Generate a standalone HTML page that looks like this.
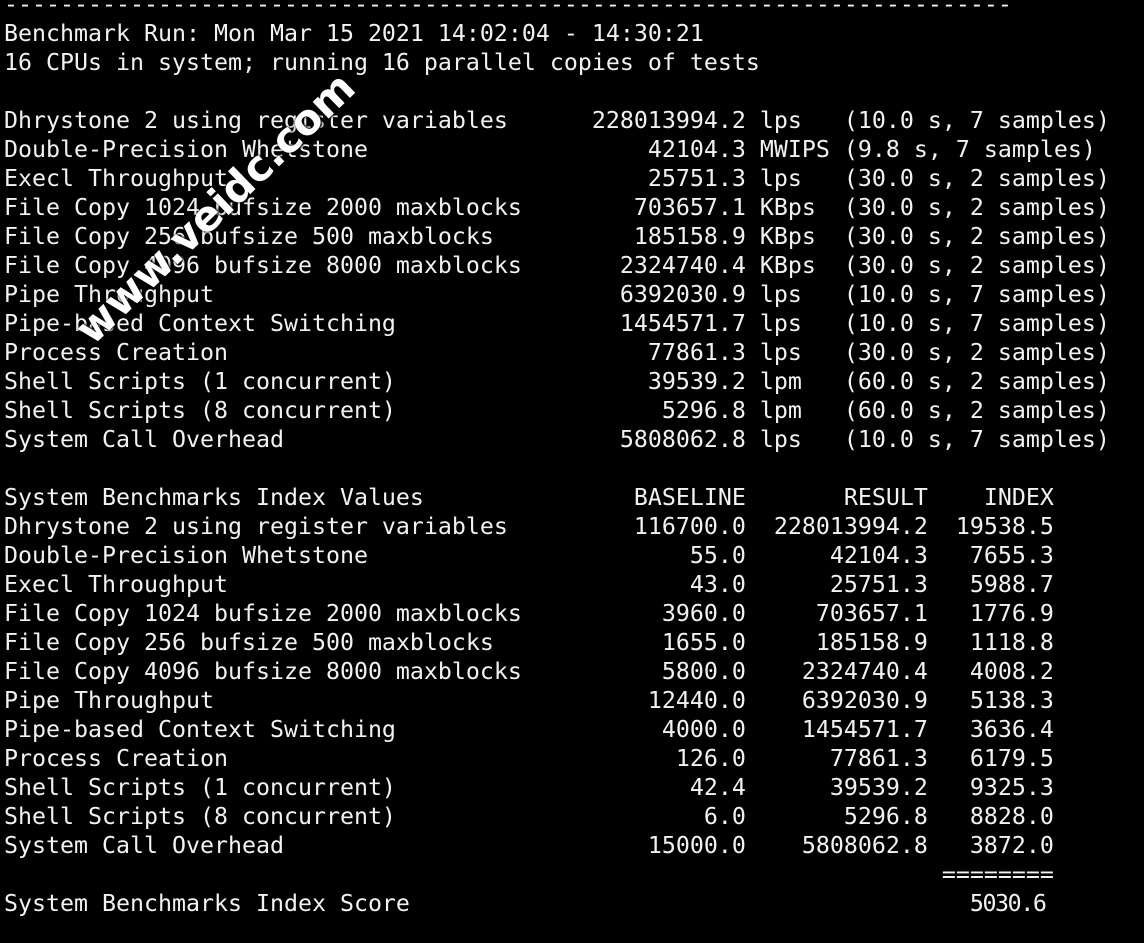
<!DOCTYPE html>
<html><head><meta charset="utf-8"><style>
html,body{margin:0;padding:0;background:#000;width:1144px;height:943px;overflow:hidden}
pre{position:absolute;left:4px;top:-10px;margin:0;font-family:"DejaVu Sans Mono","Liberation Mono",monospace;font-size:23.25px;line-height:29px;color:#f2f2f2;white-space:pre}
.wm{position:absolute;left:215px;top:208px;transform:translate(-50%,-50%) rotate(-44deg);font-family:"DejaVu Sans","Liberation Sans",sans-serif;font-weight:bold;font-size:42px;color:#fff;white-space:nowrap;text-shadow:0 0 2px #000,1px 1px 2px #000}
.s{position:relative;left:0px;letter-spacing:-1.4px}
</style></head><body>
<pre>------------------------------------------------------------------------
Benchmark Run: Mon Mar 15 2021 14:02:04 - 14:30:21
16 CPUs in system; running 16 parallel copies of tests

Dhrystone 2 using register variables      228013994.2 lps   (10.0 s, 7 samples)
Double-Precision Whetstone                    42104.3 MWIPS (9.8 s, 7 samples)
Execl Throughput                              25751.3 lps   (30.0 s, 2 samples)
File Copy 1024 bufsize 2000 maxblocks        703657.1 KBps  (30.0 s, 2 samples)
File Copy 256 bufsize 500 maxblocks          185158.9 KBps  (30.0 s, 2 samples)
File Copy 4096 bufsize 8000 maxblocks       2324740.4 KBps  (30.0 s, 2 samples)
Pipe Throughput                             6392030.9 lps   (10.0 s, 7 samples)
Pipe-based Context Switching                1454571.7 lps   (10.0 s, 7 samples)
Process Creation                              77861.3 lps   (30.0 s, 2 samples)
Shell Scripts (1 concurrent)                  39539.2 lpm   (60.0 s, 2 samples)
Shell Scripts (8 concurrent)                   5296.8 lpm   (60.0 s, 2 samples)
System Call Overhead                        5808062.8 lps   (10.0 s, 7 samples)

System Benchmarks Index Values               BASELINE       RESULT    INDEX
Dhrystone 2 using register variables         116700.0  228013994.2  19538.5
Double-Precision Whetstone                       55.0      42104.3   7655.3
Execl Throughput                                 43.0      25751.3   5988.7
File Copy 1024 bufsize 2000 maxblocks          3960.0     703657.1   1776.9
File Copy 256 bufsize 500 maxblocks            1655.0     185158.9   1118.8
File Copy 4096 bufsize 8000 maxblocks          5800.0    2324740.4   4008.2
Pipe Throughput                               12440.0    6392030.9   5138.3
Pipe-based Context Switching                   4000.0    1454571.7   3636.4
Process Creation                                126.0      77861.3   6179.5
Shell Scripts (1 concurrent)                     42.4      39539.2   9325.3
Shell Scripts (8 concurrent)                      6.0       5296.8   8828.0
System Call Overhead                          15000.0    5808062.8   3872.0
                                                                   ========
System Benchmarks Index Score                                        <span class="s">5030.6</span></pre>
<div class="wm">www.veidc.com</div>
</body></html>
